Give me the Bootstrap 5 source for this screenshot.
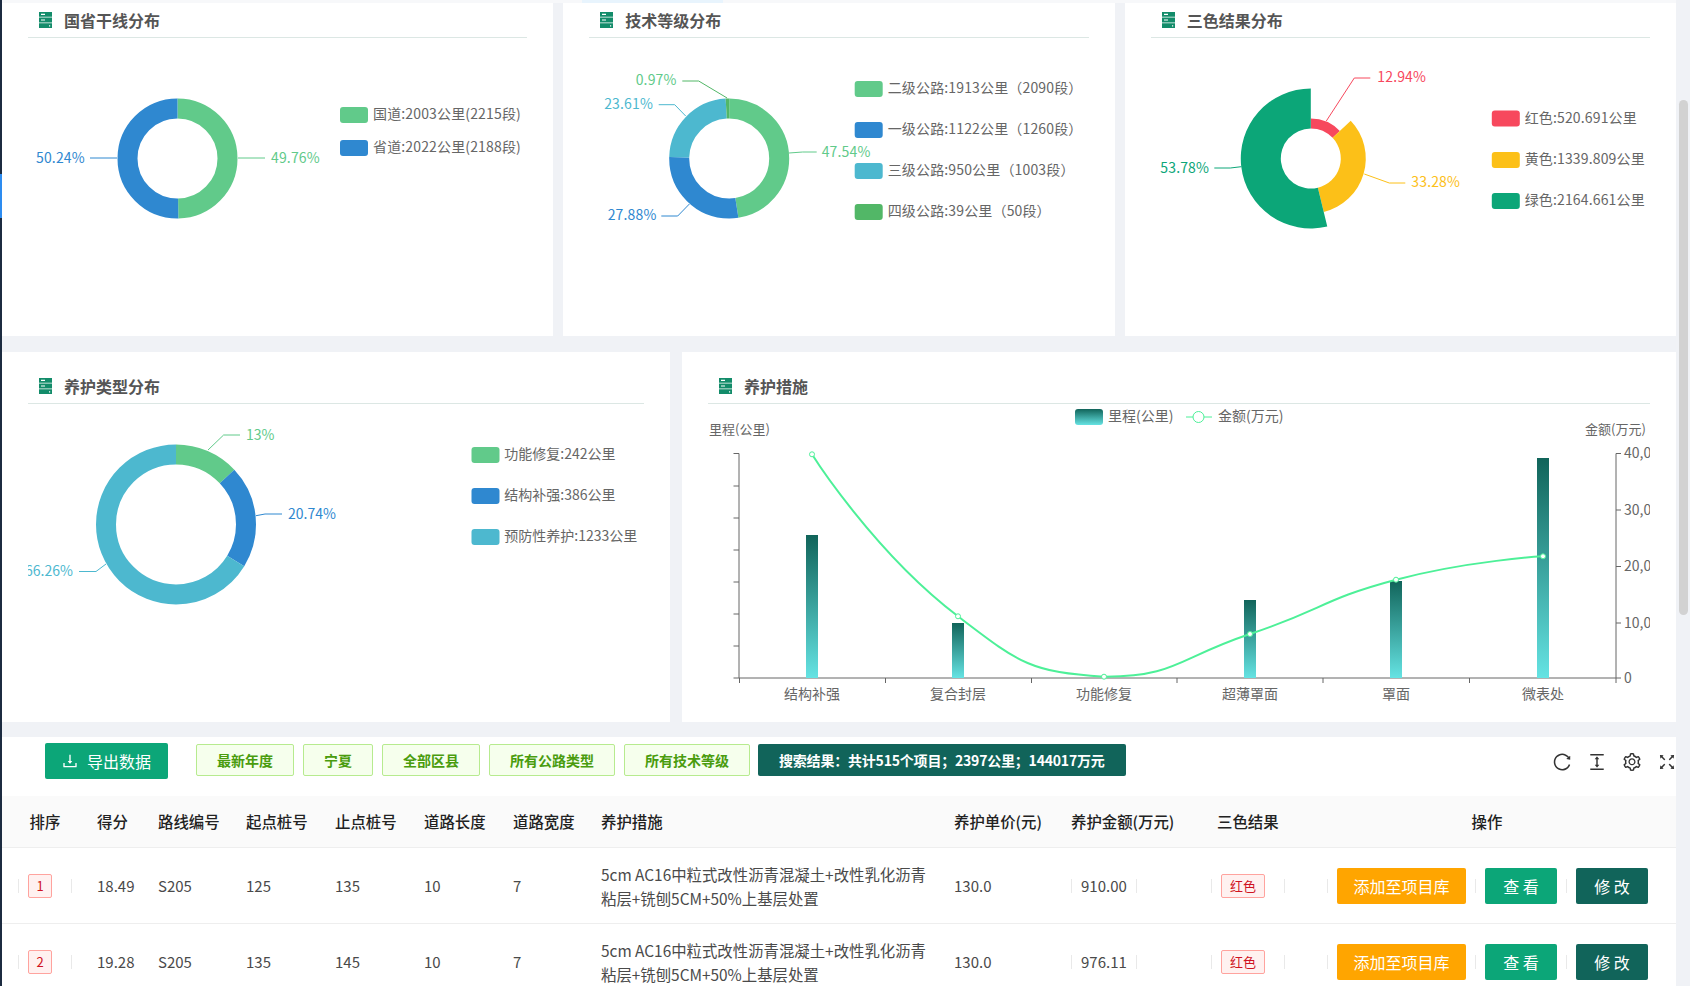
<!DOCTYPE html>
<html lang="zh-CN">
<head>
    <meta charset="UTF-8">
    <meta name="viewport" content="width=device-width, initial-scale=1.0">
    <title>养护方案分析</title>
    <link href="https://cdn.jsdelivr.net/npm/bootstrap@5.3.0/dist/css/bootstrap.min.css" rel="stylesheet">
    <style>
        html, body {
            height: 986px;
            overflow: hidden;
        }
        body {
            font-family: "Noto Sans CJK SC", "Liberation Sans", sans-serif;
            font-size: 14px;
            color: #555;
            background-color: #f0f2f6;
        }
        .page-wrap {
            position: relative;
            height: 986px;
            overflow: hidden;
            padding-left: 2px;
            padding-right: 14px;
        }
        .side-line {
            position: absolute;
            left: 0;
            top: 0;
            width: 2px;
            height: 986px;
            background-color: #1c2b40;
        }
        .side-mark {
            position: absolute;
            left: 0;
            top: 174px;
            width: 2px;
            height: 44px;
            background-color: #2d8cf0;
        }
        .scroll-thumb {
            position: absolute;
            right: 2px;
            top: 100px;
            width: 9px;
            height: 515px;
            border-radius: 5px;
            background-color: #d2d2d2;
        }
        .top-strip {
            height: 3px;
            background-color: #f7f8fa;
            padding-left: 580px;
        }
        .top-strip span {
            display: block;
            width: 141px;
            height: 3px;
            background-color: #e8f4fd;
        }
        .row-three {
            display: grid;
            grid-template-columns: repeat(3, 1fr);
            gap: 10px;
            height: 333px;
        }
        .row-two {
            display: grid;
            grid-template-columns: 668px 1fr;
            gap: 12px;
            height: 370px;
            margin-top: 16px;
        }
        .panel-box {
            background-color: #fff;
            padding: 0 26px;
            overflow: hidden;
        }
        .panel-head {
            display: flex;
            align-items: center;
            height: 25px;
            padding-bottom: 9px;
            box-sizing: content-box;
            border-bottom: 1px solid #dce7e4;
            font-size: 16px;
            font-weight: 700;
            color: #555;
            line-height: 16px;
        }
        .row-three .panel-head {
            height: 16px;
            padding-top: 9px;
        }
        .row-two .panel-head {
            height: 16px;
            padding-top: 26px;
        }
        .panel-head svg {
            width: 13px;
            height: 16px;
            margin-left: 11px;
            margin-right: 12px;
        }
        .chart-svg {
            display: block;
            overflow: hidden;
            font-size: 14px;
        }
        .chart-svg text {
            dominant-baseline: central;
            fill: #666;
        }
        .row-three .chart-svg text {
            letter-spacing: .15px;
        }
        .chart-svg .axis-name {
            font-size: 13px;
        }
        .chart-svg polyline {
            fill: none;
            stroke-width: 1;
        }
        .table-box {
            margin-top: 15px;
            height: 249px;
            background-color: #fff;
            overflow: hidden;
        }
        .tool-row {
            height: 59px;
            padding-top: 6px;
            padding-left: 43px;
        }
        .btn-export {
            width: 123px;
            height: 36px;
            padding: 0;
            margin-right: 28px;
            border: 0;
            border-radius: 2px;
            background-color: #0ca678;
            color: #fff;
            font-size: 16px;
            gap: 9px;
        }
        .btn-export svg {
            width: 16px;
            height: 16px;
            fill: #fff;
        }
        .filter-tag {
            height: 32px;
            margin-top: 1px;
            margin-right: 9px;
            padding: 0 20px;
            border: 1px solid #b7eb8f;
            border-radius: 2px;
            background-color: #f6ffed;
            color: #4a9c0e;
            font-weight: 700;
            line-height: 30px;
        }
        .result-tag {
            height: 32px;
            margin-top: 1px;
            margin-left: -1px;
            padding: 0 21px;
            border-radius: 2px;
            background-color: #11645a;
            color: #fff;
            font-weight: 700;
            line-height: 32px;
            letter-spacing: -.2px;
        }
        .tool-icons {
            margin-top: 10px;
            gap: 17px;
        }
        .tool-icons svg {
            width: 18px;
            height: 18px;
            fill: #333;
        }
        .plan-table {
            table-layout: fixed;
            width: 1674px;
            margin: 0;
            font-size: 15px;
            --bs-table-border-color: #eeeeee;
        }
        .plan-table th {
            height: 51px;
            padding: 0;
            background-color: #fafafa;
            color: #222;
            font-size: 15.4px;
            font-weight: 500;
            vertical-align: middle;
        }
        .plan-table td {
            height: 76px;
            padding: 2px 0 0;
            color: #4a4a4a;
            vertical-align: middle;
            line-height: 24px;
        }
        .plan-table .desc-cell {
            font-size: 15.4px;
        }
        .plan-table th.first-col {
            padding-left: 27.6px;
        }
        .plan-table td.first-col {
            padding-left: 26px;
        }
        .plan-table th.op-head {
            padding-right: 39px;
            text-align: center;
        }
        .cell-flex {
            display: flex;
            align-items: center;
            gap: 9px;
        }
        .rank-flex, .act-flex {
            margin-left: -10px;
        }
        .color-flex {
            margin-left: -6px;
        }
        .vsep {
            flex: none;
            width: 1px;
            height: 14px;
            background-color: #e9e9e9;
        }
        .vsep-far {
            margin-left: 9.6px;
        }
        .red-tag {
            display: inline-block;
            height: 24px;
            padding: 0 8px;
            border: 1px solid #ffa39e;
            border-radius: 2px;
            background-color: #fff1f0;
            color: #cf1322;
            font-size: 13px;
            line-height: 22px;
            text-align: center;
        }
        .rank-flex .red-tag {
            padding: 0 7.5px;
        }
        .act-btn {
            height: 36px;
            padding: 0;
            border: 0;
            border-radius: 2px;
            color: #fff;
            font-size: 16px;
            line-height: 36px;
        }
        .act-add {
            width: 129px;
            background-color: #ffa500;
        }
        .act-view {
            width: 72px;
            background-color: #0ca678;
        }
        .act-edit {
            width: 72px;
            background-color: #11645a;
        }
    </style>
</head>
<body>

<svg width="0" height="0" class="position-absolute">
    <defs>
        <symbol id="server-icon" viewBox="0 0 13 16">
            <path fill="#138c6a" d="M0 0h13v4.8H0zM0 5.6h13v4.8H0zM0 11.2h13V16H0z"/>
            <path fill="#fff" d="M2 1.8h4v1.2H2zM2 7.4h4v1.2H2zM10 13.2h1.2v1.2H10z"/>
        </symbol>
        <linearGradient id="bar-fill" x1="0" y1="0" x2="0" y2="1">
            <stop offset="0" stop-color="#11645a"/>
            <stop offset="1" stop-color="#65e3e3"/>
        </linearGradient>
    </defs>
</svg>

<div class="page-wrap">
    <div class="top-strip"><span></span></div>

    <div class="row-three">
        <div class="panel-box">
            <div class="panel-head"><svg><use href="#server-icon"/></svg>国省干线分布</div>
            <svg class="chart-svg" width="499" height="298" viewBox="28 38 499 298">
                <g fill="none" stroke-width="20">
                    <circle cx="177.5" cy="158.5" r="50" stroke="#61ca8a" pathLength="100" stroke-dasharray="49.76 100" transform="rotate(-90 177.5 158.5)"/>
                    <circle cx="177.5" cy="158.5" r="50" stroke="#2f88d0" pathLength="100" stroke-dasharray="50.24 100" stroke-dashoffset="-49.76" transform="rotate(-90 177.5 158.5)"/>
                </g>
                <polyline stroke="#61ca8a" points="238,158 265,158"/>
                <polyline stroke="#2f88d0" points="117,158 90,158"/>
                <text x="271" y="157" style="fill:#61ca8a">49.76%</text>
                <text x="36" y="157" style="fill:#2f88d0">50.24%</text>
                <rect x="340" y="107" width="28" height="16" rx="3" fill="#61ca8a"/>
                <text x="373" y="113">国道:2003公里(2215段)</text>
                <rect x="340" y="140" width="28" height="16" rx="3" fill="#2f88d0"/>
                <text x="373" y="146">省道:2022公里(2188段)</text>
            </svg>
        </div>

        <div class="panel-box">
            <div class="panel-head"><svg><use href="#server-icon"/></svg>技术等级分布</div>
            <svg class="chart-svg" width="499" height="298" viewBox="589.3 38 499 298">
                <g fill="none" stroke-width="20">
                    <circle cx="729.5" cy="158.5" r="50" stroke="#61ca8a" pathLength="100" stroke-dasharray="47.54 100" transform="rotate(-90 729.5 158.5)"/>
                    <circle cx="729.5" cy="158.5" r="50" stroke="#2f88d0" pathLength="100" stroke-dasharray="27.88 100" stroke-dashoffset="-47.54" transform="rotate(-90 729.5 158.5)"/>
                    <circle cx="729.5" cy="158.5" r="50" stroke="#4db8cf" pathLength="100" stroke-dasharray="23.61 100" stroke-dashoffset="-75.42" transform="rotate(-90 729.5 158.5)"/>
                    <circle cx="729.5" cy="158.5" r="50" stroke="#52b767" pathLength="100" stroke-dasharray="0.97 100" stroke-dashoffset="-99.03" transform="rotate(-90 729.5 158.5)"/>
                </g>
                <polyline stroke="#52b767" points="682.6,81 699,81 727.4,98"/>
                <polyline stroke="#4db8cf" points="659,104.7 675,104.7 686,116"/>
                <polyline stroke="#2f88d0" points="661.6,216 678,216 689.7,204"/>
                <polyline stroke="#61ca8a" points="789.3,153 803,152 817,152"/>
                <text x="636" y="79" style="fill:#61ca8a">0.97%</text>
                <text x="604.5" y="103" style="fill:#4db8cf">23.61%</text>
                <text x="608" y="214" style="fill:#2f88d0">27.88%</text>
                <text x="822" y="151" style="fill:#61ca8a">47.54%</text>
                <rect x="855" y="81" width="28" height="16" rx="3" fill="#61ca8a"/>
                <text x="888" y="87">二级公路:1913公里（2090段）</text>
                <rect x="855" y="122" width="28" height="16" rx="3" fill="#2f88d0"/>
                <text x="888" y="128">一级公路:1122公里（1260段）</text>
                <rect x="855" y="163" width="28" height="16" rx="3" fill="#4db8cf"/>
                <text x="888" y="169">三级公路:950公里（1003段）</text>
                <rect x="855" y="204" width="28" height="16" rx="3" fill="#52b767"/>
                <text x="888" y="210">四级公路:39公里（50段）</text>
            </svg>
        </div>

        <div class="panel-box">
            <div class="panel-head"><svg><use href="#server-icon"/></svg>三色结果分布</div>
            <svg class="chart-svg" width="499" height="298" viewBox="1150.7 38 499 298">
                <path fill="#f7485d" d="M1310.5,118.5 A40,40 0 0 1 1339.55,131 L1332.29,137.87 A30,30 0 0 0 1310.5,128.5 Z"/>
                <path fill="#fcc018" d="M1350.44,120.69 A55,55 0 0 1 1323.44,211.95 L1317.56,187.66 A30,30 0 0 0 1332.29,137.87 Z"/>
                <path fill="#0ca678" d="M1326.97,226.53 A70,70 0 1 1 1310.5,88.5 L1310.5,128.5 A30,30 0 1 0 1317.56,187.66 Z"/>
                <polyline stroke="#f7485d" points="1326,121 1354,78 1370,78"/>
                <polyline stroke="#fcc018" points="1364,174 1389,183 1405,183"/>
                <polyline stroke="#0ca678" points="1241,166.7 1230,168 1214,168"/>
                <text x="1377" y="76" style="fill:#f7485d">12.94%</text>
                <text x="1411" y="181" style="fill:#fcc018">33.28%</text>
                <text x="1160" y="167" style="fill:#0ca678">53.78%</text>
                <rect x="1491.5" y="110.5" width="28" height="16" rx="3" fill="#f7485d"/>
                <text x="1524.4" y="116.5">红色:520.691公里</text>
                <rect x="1491.5" y="152" width="28" height="16" rx="3" fill="#fcc018"/>
                <text x="1524.4" y="158">黄色:1339.809公里</text>
                <rect x="1491.5" y="193" width="28" height="16" rx="3" fill="#0ca678"/>
                <text x="1524.4" y="199">绿色:2164.661公里</text>
            </svg>
        </div>
    </div>

    <div class="row-two">
        <div class="panel-box">
            <div class="panel-head"><svg><use href="#server-icon"/></svg>养护类型分布</div>
            <svg class="chart-svg" width="616" height="318" viewBox="28 404 616 318">
                <g fill="none" stroke-width="20">
                    <circle cx="176" cy="524.4" r="70" stroke="#61ca8a" pathLength="100" stroke-dasharray="13 100" transform="rotate(-90 176 524.4)"/>
                    <circle cx="176" cy="524.4" r="70" stroke="#2f88d0" pathLength="100" stroke-dasharray="20.74 100" stroke-dashoffset="-13" transform="rotate(-90 176 524.4)"/>
                    <circle cx="176" cy="524.4" r="70" stroke="#4db8cf" pathLength="100" stroke-dasharray="66.26 100" stroke-dashoffset="-33.74" transform="rotate(-90 176 524.4)"/>
                </g>
                <polyline stroke="#61ca8a" points="208,450 223.6,435 240,435"/>
                <polyline stroke="#2f88d0" points="256,515.7 265,514 282,514"/>
                <polyline stroke="#4db8cf" points="106,564 96,571.5 79,571.5"/>
                <text x="246" y="433.5" style="fill:#61ca8a">13%</text>
                <text x="288" y="512.5" style="fill:#2f88d0">20.74%</text>
                <text x="25" y="570" style="fill:#4db8cf">66.26%</text>
                <rect x="471.5" y="447" width="28" height="16" rx="3" fill="#61ca8a"/>
                <text x="504.3" y="453">功能修复:242公里</text>
                <rect x="471.5" y="488" width="28" height="16" rx="3" fill="#2f88d0"/>
                <text x="504.3" y="494">结构补强:386公里</text>
                <rect x="471.5" y="529" width="28" height="16" rx="3" fill="#4db8cf"/>
                <text x="504.3" y="535">预防性养护:1233公里</text>
            </svg>
        </div>

        <div class="panel-box">
            <div class="panel-head"><svg><use href="#server-icon"/></svg>养护措施</div>
            <svg class="chart-svg" width="942" height="318" viewBox="708 404 942 318">
                <rect x="1075" y="409" width="28" height="16" rx="3" fill="url(#bar-fill)"/>
                <text x="1108" y="415">里程(公里)</text>
                <path d="M1186,417 h26" stroke="#4df098" fill="none"/>
                <circle cx="1198.5" cy="417" r="5.5" fill="#fff" stroke="#4df098"/>
                <text x="1218" y="415">金额(万元)</text>
                <text class="axis-name" x="709" y="428">里程(公里)</text>
                <text class="axis-name" x="1585" y="428">金额(万元)</text>

                <path fill="none" stroke="#666" d="M739,453.5 V678 M733.5,453.5 H739 M733.5,486 H739 M733.5,518 H739 M733.5,550 H739 M733.5,582 H739 M733.5,614 H739 M733.5,646 H739 M733.5,678 H739"/>
                <path fill="none" stroke="#666" d="M1616,453.5 V678 M1616,453.5 H1621 M1616,510 H1621 M1616,566.5 H1621 M1616,623 H1621 M1616,678 H1621"/>
                <path fill="none" stroke="#666" d="M739,678 H1616 M739.5,678 V683 M885.5,678 V683 M1031.5,678 V683 M1177,678 V683 M1323,678 V683 M1469.5,678 V683 M1616,678 V683"/>

                <rect x="806" y="535" width="12" height="143" fill="url(#bar-fill)"/>
                <rect x="952" y="623" width="12" height="55" fill="url(#bar-fill)"/>
                <rect x="1244" y="600" width="12" height="78" fill="url(#bar-fill)"/>
                <rect x="1390" y="581" width="12" height="97" fill="url(#bar-fill)"/>
                <rect x="1537" y="458" width="12" height="220" fill="url(#bar-fill)"/>

                <path fill="none" stroke="#4df098" stroke-width="2" d="M812,454.3 C812,454.3 873.3,551.8 958,616.3 C1019.3,663 1029.5,672.2 1104,676.7 C1175.5,677 1177.9,658 1250,634 C1323.9,609.5 1321.1,599.6 1396,579.7 C1467.6,560.7 1543,556.3 1543,556.3"/>
                <g fill="#fff" stroke="#4df098">
                    <circle cx="812" cy="454.3" r="2.5"/>
                    <circle cx="958" cy="616.3" r="2.5"/>
                    <circle cx="1104" cy="676.7" r="2.5"/>
                    <circle cx="1250" cy="634" r="2.5"/>
                    <circle cx="1396" cy="579.7" r="2.5"/>
                    <circle cx="1543" cy="556.3" r="2.5"/>
                </g>

                <g text-anchor="middle">
                    <text x="812" y="693">结构补强</text>
                    <text x="958" y="693">复合封层</text>
                    <text x="1104" y="693">功能修复</text>
                    <text x="1250" y="693">超薄罩面</text>
                    <text x="1396" y="693">罩面</text>
                    <text x="1543" y="693">微表处</text>
                </g>
                <text x="1624" y="452">40,000</text>
                <text x="1624" y="509">30,000</text>
                <text x="1624" y="565">20,000</text>
                <text x="1624" y="622">10,000</text>
                <text x="1624" y="677">0</text>
            </svg>
        </div>
    </div>

    <div class="table-box">
        <div class="tool-row d-flex align-items-start">
            <button class="btn btn-export d-flex align-items-center justify-content-center">
                <svg viewBox="64 64 896 896"><path d="M505.7 661a8 8 0 0 0 12.6 0l112-141.7c4.1-5.2.4-12.9-6.3-12.9h-74.1V168c0-4.4-3.6-8-8-8h-60c-4.4 0-8 3.6-8 8v338.3H400c-6.7 0-10.4 7.7-6.3 12.9l112 141.8zM878 626h-60c-4.4 0-8 3.6-8 8v154H214V634c0-4.4-3.6-8-8-8h-60c-4.4 0-8 3.6-8 8v198c0 17.7 14.3 32 32 32h684c17.7 0 32-14.3 32-32V634c0-4.4-3.6-8-8-8z"/></svg>
                <span>导出数据</span>
            </button>
            <span class="filter-tag">最新年度</span>
            <span class="filter-tag">宁夏</span>
            <span class="filter-tag">全部区县</span>
            <span class="filter-tag">所有公路类型</span>
            <span class="filter-tag">所有技术等级</span>
            <span class="result-tag">搜索结果：共计515个项目；2397公里；144017万元</span>
            <div class="tool-icons d-flex ms-auto">
                <svg viewBox="64 64 896 896"><path d="M909.1 209.3l-56.4 44.1C775.8 155.1 656.2 92 521.9 92 290 92 102.3 279.5 102 511.5 101.7 743.7 289.8 932 521.9 932c181.3 0 335.8-115 394.6-276.1 1.5-4.2-.7-8.9-4.9-10.3l-56.7-19.5a8 8 0 0 0-10.1 4.8c-1.8 5-3.8 10-5.9 14.9-17.3 41-42.1 77.8-73.7 109.4A344.77 344.77 0 0 1 655.9 829c-42.3 17.9-87.4 27-133.8 27-46.5 0-91.5-9.1-133.8-27A341.5 341.5 0 0 1 279 755.2a342.16 342.16 0 0 1-73.7-109.4c-17.9-42.4-27-87.4-27-133.9s9.1-91.5 27-133.9c17.3-41 42.1-77.8 73.7-109.4 31.6-31.6 68.4-56.4 109.3-73.8 42.3-17.9 87.4-27 133.8-27 46.5 0 91.5 9.1 133.8 27a341.5 341.5 0 0 1 109.3 73.8c9.9 9.9 19.2 20.4 27.8 31.4l-60.2 47a8 8 0 0 0 3 14.1l175.6 43c5 1.2 9.9-2.6 9.9-7.7l.8-180.9c-.1-6.6-7.8-10.3-13-6.2z"/></svg>
                <svg viewBox="64 64 896 896"><path d="M840 836H184c-4.4 0-8 3.6-8 8v60c0 4.4 3.6 8 8 8h656c4.4 0 8-3.6 8-8v-60c0-4.4-3.6-8-8-8zm0-724H184c-4.4 0-8 3.6-8 8v60c0 4.4 3.6 8 8 8h656c4.4 0 8-3.6 8-8v-60c0-4.4-3.6-8-8-8zM610.8 378c6 0 9.4-7 5.7-11.7L515.7 238.7a7.14 7.14 0 0 0-11.3 0L403.6 366.3a7.23 7.23 0 0 0 5.7 11.7H476v268h-62.8c-6 0-9.4 7-5.7 11.6l100.8 127.5c2.9 3.7 8.5 3.7 11.3 0l100.8-127.5c3.7-4.7.4-11.6-5.7-11.6H548V378h62.8z"/></svg>
                <svg viewBox="64 64 896 896"><path d="M924.8 625.7l-65.5-56c3.1-19 4.7-38.4 4.7-57.8s-1.6-38.8-4.7-57.8l65.5-56a32.03 32.03 0 0 0 9.3-35.2l-.9-2.6a443.74 443.74 0 0 0-79.7-137.9l-1.8-2.1a32.12 32.12 0 0 0-35.1-9.5l-81.3 28.9c-30-24.6-63.5-44-99.7-57.6l-15.7-85a32.05 32.05 0 0 0-25.8-25.7l-2.7-.5c-52.1-9.4-106.9-9.4-159 0l-2.7.5a32.05 32.05 0 0 0-25.8 25.7l-15.8 85.4a351.86 351.86 0 0 0-99 57.4l-81.9-29.1a32 32 0 0 0-35.1 9.5l-1.8 2.1a446.02 446.02 0 0 0-79.7 137.9l-.9 2.6c-4.5 12.5-.8 26.5 9.3 35.2l66.3 56.6c-3.1 18.8-4.6 38-4.6 57.1 0 19.2 1.5 38.4 4.6 57.1L99 625.5a32.03 32.03 0 0 0-9.3 35.2l.9 2.6c18.1 50.4 44.9 96.9 79.7 137.9l1.8 2.1a32.12 32.12 0 0 0 35.1 9.5l81.9-29.1c29.8 24.5 63.1 43.9 99 57.4l15.8 85.4a32.05 32.05 0 0 0 25.8 25.7l2.7.5a449.4 449.4 0 0 0 159 0l2.7-.5a32.05 32.05 0 0 0 25.8-25.7l15.7-85a350 350 0 0 0 99.7-57.6l81.3 28.9a32 32 0 0 0 35.1-9.5l1.8-2.1c34.8-41.1 61.6-87.5 79.7-137.9l.9-2.6c4.5-12.3.8-26.3-9.3-35zM788.3 465.9c2.5 15.1 3.8 30.6 3.8 46.1s-1.3 31-3.8 46.1l-6.6 40.1 74.7 63.9a370.03 370.03 0 0 1-42.6 73.6L721 702.8l-31.4 25.8c-23.9 19.6-50.5 35-79.3 45.8l-38.1 14.3-17.9 97a377.5 377.5 0 0 1-85 0l-17.9-97.2-37.8-14.5c-28.5-10.8-55-26.2-78.7-45.7l-31.4-25.9-93.4 33.2c-17-22.9-31.2-47.6-42.6-73.6l75.5-64.5-6.5-40c-2.4-14.9-3.7-30.3-3.7-45.5 0-15.3 1.2-30.6 3.7-45.5l6.5-40-75.5-64.5c11.3-26.1 25.6-50.7 42.6-73.6l93.4 33.2 31.4-25.9c23.7-19.5 50.2-34.9 78.7-45.7l37.9-14.3 17.9-97.2c28.1-3.2 56.8-3.2 85 0l17.9 97 38.1 14.3c28.7 10.8 55.4 26.2 79.3 45.8l31.4 25.8 92.8-32.9c17 22.9 31.2 47.6 42.6 73.6L781.8 426l6.5 39.9zM512 326c-97.2 0-176 78.8-176 176s78.8 176 176 176 176-78.8 176-176-78.8-176-176-176zm79.2 255.2A111.6 111.6 0 0 1 512 614c-29.9 0-58-11.7-79.2-32.8A111.6 111.6 0 0 1 400 502c0-29.9 11.7-58 32.8-79.2C454 401.6 482.1 390 512 390c29.9 0 58 11.6 79.2 32.8A111.6 111.6 0 0 1 624 502c0 29.9-11.7 58-32.8 79.2z"/></svg>
                <svg viewBox="64 64 896 896"><path d="M290 236.4l43.9-43.9a8.01 8.01 0 0 0-4.7-13.6L169 160c-5.1-.6-9.5 3.7-8.9 8.9L179 329.1c.8 6.6 8.9 9.4 13.6 4.7l43.7-43.7L370 423.7c3.1 3.1 8.2 3.1 11.3 0l42.4-42.3c3.1-3.1 3.1-8.2 0-11.3L290 236.4zm352.7 187.3c3.1 3.1 8.2 3.1 11.3 0l133.7-133.6 43.7 43.7a8.01 8.01 0 0 0 13.6-4.7L863.9 169c.6-5.1-3.7-9.5-8.9-8.9L694.8 179c-6.6.8-9.4 8.9-4.7 13.6l43.9 43.9L600.3 370a8.03 8.03 0 0 0 0 11.3l42.4 42.4zM845 694.9c-.8-6.6-8.9-9.4-13.6-4.7l-43.7 43.7L654 600.3a8.03 8.03 0 0 0-11.3 0l-42.4 42.3a8.03 8.03 0 0 0 0 11.3L734 787.6l-43.9 43.9a8.01 8.01 0 0 0 4.7 13.6L855 864c5.1.6 9.5-3.7 8.9-8.9L845 694.9zm-463.7-94.6a8.03 8.03 0 0 0-11.3 0L236.3 733.9l-43.7-43.7a8.01 8.01 0 0 0-13.6 4.7L160.1 855c-.6 5.1 3.7 9.5 8.9 8.9L329.2 845c6.6-.8 9.4-8.9 4.7-13.6L290 787.6 423.7 654c3.1-3.1 3.1-8.2 0-11.3l-42.4-42.4z"/></svg>
            </div>
        </div>

        <table class="table plan-table">
            <colgroup>
                <col style="width:95px"><col style="width:61px"><col style="width:88px"><col style="width:89px">
                <col style="width:89px"><col style="width:89px"><col style="width:88px"><col style="width:353px">
                <col style="width:117px"><col style="width:146px"><col style="width:120px"><col style="width:339px">
            </colgroup>
            <thead>
                <tr>
                    <th class="first-col">排序</th>
                    <th>得分</th>
                    <th>路线编号</th>
                    <th>起点桩号</th>
                    <th>止点桩号</th>
                    <th>道路长度</th>
                    <th>道路宽度</th>
                    <th>养护措施</th>
                    <th>养护单价(元)</th>
                    <th>养护金额(万元)</th>
                    <th>三色结果</th>
                    <th class="op-head">操作</th>
                </tr>
            </thead>
            <tbody>
                <tr>
                    <td class="first-col"><div class="cell-flex rank-flex"><i class="vsep"></i><span class="red-tag">1</span><i class="vsep vsep-far"></i></div></td>
                    <td>18.49</td>
                    <td>S205</td>
                    <td>125</td>
                    <td>135</td>
                    <td>10</td>
                    <td>7</td>
                    <td class="desc-cell">5cm AC16中粒式改性沥青混凝土+改性乳化沥青<br>粘层+铣刨5CM+50%上基层处置</td>
                    <td>130.0</td>
                    <td><div class="cell-flex"><i class="vsep"></i><span>910.00</span><i class="vsep"></i></div></td>
                    <td><div class="cell-flex color-flex"><i class="vsep"></i><span class="red-tag">红色</span><i class="vsep vsep-far"></i></div></td>
                    <td><div class="cell-flex act-flex"><i class="vsep"></i><button class="btn act-btn act-add">添加至项目库</button><i class="vsep"></i><button class="btn act-btn act-view">查 看</button><i class="vsep"></i><button class="btn act-btn act-edit">修 改</button></div></td>
                </tr>
                <tr>
                    <td class="first-col"><div class="cell-flex rank-flex"><i class="vsep"></i><span class="red-tag">2</span><i class="vsep vsep-far"></i></div></td>
                    <td>19.28</td>
                    <td>S205</td>
                    <td>135</td>
                    <td>145</td>
                    <td>10</td>
                    <td>7</td>
                    <td class="desc-cell">5cm AC16中粒式改性沥青混凝土+改性乳化沥青<br>粘层+铣刨5CM+50%上基层处置</td>
                    <td>130.0</td>
                    <td><div class="cell-flex"><i class="vsep"></i><span>976.11</span><i class="vsep"></i></div></td>
                    <td><div class="cell-flex color-flex"><i class="vsep"></i><span class="red-tag">红色</span><i class="vsep vsep-far"></i></div></td>
                    <td><div class="cell-flex act-flex"><i class="vsep"></i><button class="btn act-btn act-add">添加至项目库</button><i class="vsep"></i><button class="btn act-btn act-view">查 看</button><i class="vsep"></i><button class="btn act-btn act-edit">修 改</button></div></td>
                </tr>
            </tbody>
        </table>
    </div>

    <div class="side-line"></div>
    <div class="side-mark"></div>
    <div class="scroll-thumb"></div>
</div>

<script src="https://cdn.jsdelivr.net/npm/bootstrap@5.3.0/dist/js/bootstrap.bundle.min.js"></script>
</body>
</html>
